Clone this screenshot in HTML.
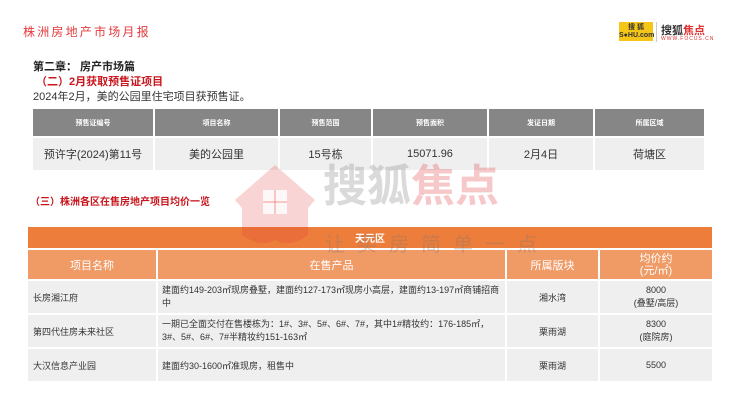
<!DOCTYPE html>
<html><head><meta charset="utf-8"><style>
*{margin:0;padding:0;box-sizing:border-box}
body{width:740px;height:416px;background:#fff;position:relative;overflow:hidden;font-family:"Liberation Sans","Noto Sans CJK SC",sans-serif}
.a{position:absolute}
table{border-collapse:collapse;position:absolute}
td{text-align:center;border:2px solid #fff;padding:0}
</style></head><body>
<div class="a" style="left:23px;top:23px;font-size:12px;color:#e4393c;letter-spacing:2.2px">株洲房地产市场月报</div>
<div class="a" style="left:619px;top:22px;width:34px;height:19px;background:#f5c518;font-size:7px;line-height:8px;text-align:center;padding-top:2px;color:#333;font-weight:bold">搜 狐<br>S●HU.com</div>
<div class="a" style="left:656px;top:22px;width:1px;height:20px;background:#ccc"></div>
<div class="a" style="left:661px;top:22px;font-size:11px;color:#333;font-weight:bold">搜狐<span style="color:#d33">焦点</span></div>
<div class="a" style="left:661px;top:36px;font-size:5px;color:#d33;letter-spacing:1px">WWW.FOCUS.CN</div>

<div class="a" style="left:33px;top:58px;font-size:11px;font-weight:bold;color:#222">第二章： 房产市场篇</div>
<div class="a" style="left:36px;top:73px;font-size:11px;font-weight:bold;color:#c8161d">（二）2月获取预售证项目</div>
<div class="a" style="left:33px;top:88px;font-size:11px;color:#333">2024年2月，美的公园里住宅项目获预售证。</div>

<table style="left:31px;top:107px;width:675px;font-size:11px;color:#333">
<tr style="height:29px;background:#868686;color:#fff;font-size:7px;font-weight:bold"><td style="width:122px">预售证编号</td><td style="width:125px">项目名称</td><td style="width:93px">预售范围</td><td style="width:116px">预售面积</td><td style="width:106px">发证日期</td><td>所属区域</td></tr>
<tr style="height:34px;background:#efefef"><td>预许字(2024)第11号</td><td>美的公园里</td><td>15号栋</td><td>15071.96</td><td>2月4日</td><td>荷塘区</td></tr>
</table>

<div class="a" style="left:30px;top:193px;font-size:10px;font-weight:bold;color:#c8161d">（三）株洲各区在售房地产项目均价一览</div>

<table style="left:26px;top:225px;width:688px;font-size:9px;color:#333">
<tr style="height:23px;background:#ec7d3a;color:#fff;font-weight:bold;font-size:10px"><td colspan="4">天元区</td></tr>
<tr style="height:31px;background:#f09a66;color:#fff;font-size:11px"><td style="width:130px">项目名称</td><td style="width:349px">在售产品</td><td style="width:93px">所属版块</td><td style="line-height:12px">均价约<br>(元/㎡)</td></tr>
<tr style="height:34px;background:#efefef"><td style="text-align:left;padding-left:5px">长房湘江府</td><td style="text-align:left;padding-left:4px;line-height:13px">建面约149-203㎡现房叠墅，建面约127-173㎡现房小高层，建面约13-197㎡商铺招商中</td><td>湘水湾</td><td style="line-height:13px">8000<br>(叠墅/高层)</td></tr>
<tr style="height:34px;background:#efefef"><td style="text-align:left;padding-left:5px">第四代住房未来社区</td><td style="text-align:left;padding-left:4px;line-height:13px">一期已全面交付在售楼栋为：1#、3#、5#、6#、7#，其中1#精妆约：176-185㎡，3#、5#、6#、7#半精妆约151-163㎡</td><td>栗雨湖</td><td style="line-height:13px">8300<br>(庭院房)</td></tr>
<tr style="height:34px;background:#efefef"><td style="text-align:left;padding-left:5px">大汉信息产业园</td><td style="text-align:left;padding-left:4px">建面约30-1600㎡准现房，租售中</td><td>栗雨湖</td><td>5500</td></tr>
</table>

<!-- watermark -->
<svg class="a" style="left:230px;top:160px" width="90" height="90" viewBox="0 0 90 90">
<path d="M45 5 L85 40 L78 48 L78 75 Q60 88 45 80 Q30 88 12 75 L12 48 L5 40 Z" fill="#e4393c" opacity="0.22"/>
<rect x="33" y="30" width="24" height="24" fill="#fff" opacity="0.8"/>
<rect x="44" y="30" width="2" height="24" fill="#e4393c" opacity="0.25"/><rect x="33" y="41" width="24" height="2" fill="#e4393c" opacity="0.25"/>
</svg>
<div class="a" style="left:323px;top:162px;font-size:44px;line-height:50px;color:rgba(150,150,150,0.35);font-weight:bold">搜狐<span style="color:rgba(228,57,60,0.28)">焦点</span></div>
<div class="a" style="left:325px;top:228px;font-size:20px;color:rgba(120,120,120,0.3);letter-spacing:12px">让买房简单一点</div>
</body></html>
